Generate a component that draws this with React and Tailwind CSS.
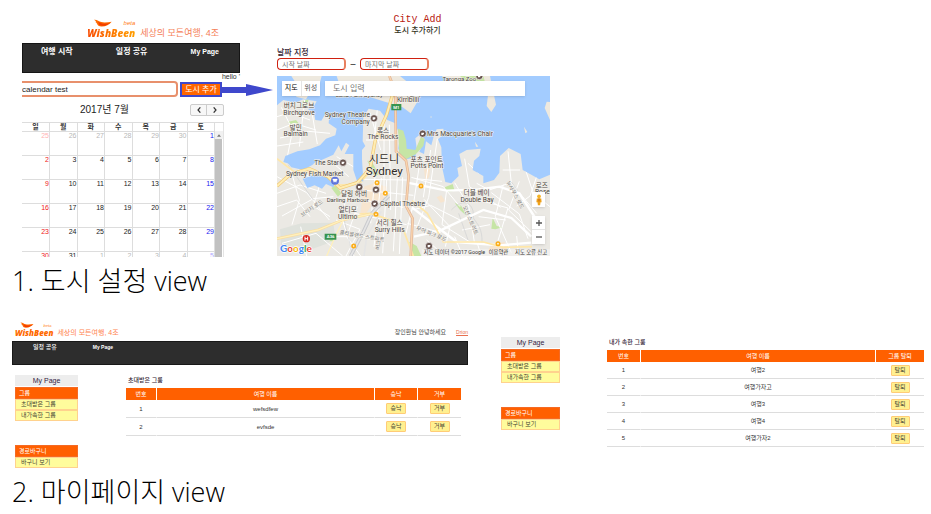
import React from "react";

const latin = "font-['Liberation_Sans','Noto_Sans_CJK_KR',sans-serif]";

function Logo({ small }) {
  return (
    <div className="flex items-end gap-1">
      <div className="flex flex-col">
        <div className={small ? "flex h-1.5 items-end justify-between pr-0.5" : "flex h-[7px] items-end justify-between pr-px"}>
          <svg viewBox="0 0 54 24" className={small ? "ml-1 h-1.5 w-4" : "ml-1.5 h-2 w-5"} aria-hidden="true">
            <path d="M0 2C10 1 14 8 22 9C32 12 43 9 53 8C45 18 31 25 18 22C8 20 12 13 4 9C9 9 4 4 0 2Z" fill="#ff6a00" />
            <path d="M13 8C21 14 34 17 49 11C38 21 23 23 15 17Z" fill="#f23c00" />
          </svg>
          <span className={small ? "text-[4px] leading-[5px] italic text-[#ff7a10]" : "text-[6px] leading-[7px] italic text-[#ff7a10]"}>beta</span>
        </div>
        <strong
          className={
            small
              ? "font-['Open_Sans',sans-serif] text-[8px] leading-[9px] font-extrabold italic text-[#ff6a00]"
              : "bg-gradient-to-r from-[#f84800] to-[#ffa000] bg-clip-text pr-px font-['Open_Sans',sans-serif] text-[10px] leading-3 font-extrabold italic text-transparent"
          }
        >
          WishBeen
        </strong>
      </div>
      <span className={small ? "text-[7px] leading-[9px] text-[#ff8350]" : "text-[9px] leading-[11px] text-[#f58058]"}>세상의 모든여행, 4조</span>
    </div>
  );
}

const weekdays = ["일", "월", "화", "수", "목", "금", "토"];
const weeks = [
  [25, 26, 27, 28, 29, 30, 1],
  [2, 3, 4, 5, 6, 7, 8],
  [9, 10, 11, 12, 13, 14, 15],
  [16, 17, 18, 19, 20, 21, 22],
  [23, 24, 25, 26, 27, 28, 29],
  [30, 31, 1, 2, 3, 4, 5],
];

function dayColor(week, day) {
  if (week === 0 && day === 0) return "text-[#ffb3b3]";
  if (week === 5 && day === 6) return "text-[#b0a8ff]";
  if ((week === 0 && day < 6) || (week === 5 && day > 1)) return "text-[#b8b8b8]";
  if (day === 0) return "text-[#f02020]";
  if (day === 6) return "text-[#2020f0]";
  return "text-[#222]";
}

function Calendar() {
  return (
    <div className="mr-4 flex h-[135px] overflow-hidden border-t border-[#ddd]">
      <table className="w-[193px] table-fixed border-collapse">
        <thead>
          <tr className="h-2">
            {weekdays.map((d) => (
              <th key={d} className="border-r border-b border-[#ddd] p-0 text-[7px] leading-[7px] font-bold text-[#333]">{d}</th>
            ))}
          </tr>
        </thead>
        <tbody>
          {weeks.map((row, w) => (
            <tr key={w} className="h-6">
              {row.map((n, d) => (
                <td key={d} className={"border-r border-b border-[#ddd] p-0 text-right align-top text-[7px] leading-[8px] " + dayColor(w, d)}>{n}</td>
              ))}
            </tr>
          ))}
        </tbody>
      </table>
      <div className="flex flex-1 flex-col border-r border-[#e4e4e4] pt-2">
        <div className="flex h-2 items-center justify-center bg-[#f1f1f1]">
          <svg viewBox="0 0 6 4" className="h-[3px] w-1" aria-hidden="true"><path d="M0 4L3 0L6 4Z" fill="#777" /></svg>
        </div>
        <div className="mr-px flex-1 bg-[#c1c1c1]" />
      </div>
    </div>
  );
}

function TripPanel() {
  return (
    <section className="w-[218px] shrink-0">
      <header className="flex h-[43px] items-end justify-end pr-[21px] pb-1">
        <Logo />
      </header>
      <nav className="flex h-[30px] justify-between border border-[#151515] bg-[#2d2d2d] pt-0.5 pr-5 pl-[18px] text-[8px] leading-[11px] font-bold text-white">
        <a href="#start">여행 시작</a>
        <a href="#share">일정 공유</a>
        <a href="#mypage" className="text-[7px]">My Page</a>
      </nav>
      <p className="h-2 text-right text-[7px] leading-2 text-[#333]">hello '</p>
      <form className="flex h-4 items-center gap-0.5">
        <input
          aria-label="여행 이름"
          defaultValue="calendar test"
          className="h-4 w-[156px] rounded-r-sm border-2 border-l-0 border-[#e8906c] bg-white text-[8px] text-[#222] outline-none"
        />
        <div className="relative">
          <button type="button" className="block h-[15px] w-[42px] border-2 border-[#3f48cc] bg-[#ff6600] text-[8px] leading-[11px] whitespace-nowrap text-white">도시 추가</button>
          <svg viewBox="0 0 51 12" className="absolute top-0.5 left-full h-3 w-[51px]" aria-hidden="true">
            <path d="M0 3H24V0L51 6L24 12V9H0Z" fill="#3f48cc" />
          </svg>
        </div>
      </form>
      <div className="flex h-[25px] items-center pr-4 pl-[58px]">
        <h2 className="flex-1 text-[10px] leading-3 text-[#222]">2017년 7월</h2>
        <div className="flex h-3 rounded-xs border border-[#ccc] bg-[#f7f7f7]">
          <button type="button" aria-label="이전 달" className="flex w-4 items-center justify-center border-r border-[#ccc]">
            <svg viewBox="0 0 6 8" className="h-1.5 w-1" aria-hidden="true"><path d="M5 0L1.500 4L5 8" fill="none" stroke="#333" strokeWidth="1.800" /></svg>
          </button>
          <button type="button" aria-label="다음 달" className="flex w-4 items-center justify-center">
            <svg viewBox="0 0 6 8" className="h-1.5 w-1" aria-hidden="true"><path d="M1 0L4.500 4L1 8" fill="none" stroke="#333" strokeWidth="1.800" /></svg>
          </button>
        </div>
      </div>
      <Calendar />
    </section>
  );
}

function SydneyMap() {
  return (
    <svg viewBox="21 18 819 540" className="block h-[180px] w-full" preserveAspectRatio="xMidYMid slice" role="img" aria-label="시드니 지도">
      <defs>
        <clipPath id="land">
          <path d="M21 106L40 90L75 98L100 88L140 94L130 112L112 116L132 128L136 150L154 152L166 132L178 134L176 160L200 176L196 196L168 206L150 226L118 238L82 244L46 258L40 276L80 288L104 292L126 276L150 272L190 254L206 226L214 244L228 218L238 226L224 252L250 252L250 300L262 336L280 334L276 268L276 240L286 228L278 214L280 140L296 116L330 122L352 150L376 160L390 200L385 235L392 262L410 268L436 262L440 235L436 205L452 192L464 208L448 245L462 252L468 214L484 226L492 196L500 178L520 176L522 192L504 208L514 232L516 290L526 336L544 340L566 318L562 294L576 288L568 252L590 240L632 236L628 258L612 272L608 300L640 318L640 340L672 330L688 308L690 258L716 234L752 252L758 300L784 314L808 328L840 314V558H21Z" />
        </clipPath>
      </defs>
      <path fill="#a3ccff" d="M21 18H840V558H21Z" />
      <path fill="#ebe9e4" d="M21 106L40 90L75 98L100 88L140 94L130 112L112 116L132 128L136 150L154 152L166 132L178 134L176 160L200 176L196 196L168 206L150 226L118 238L82 244L46 258L40 276L80 288L104 292L126 276L150 272L190 254L206 226L214 244L228 218L238 226L224 252L250 252L250 300L262 336L280 334L276 268L276 240L286 228L278 214L280 140L296 116L330 122L352 150L376 160L390 200L385 235L392 262L410 268L436 262L440 235L436 205L452 192L464 208L448 245L462 252L468 214L484 226L492 196L500 178L520 176L522 192L504 208L514 232L516 290L526 336L544 340L566 318L562 294L576 288L568 252L590 240L632 236L628 258L612 272L608 300L640 318L640 340L672 330L688 308L690 258L716 234L752 252L758 300L784 314L808 328L840 314V558H21Z" />
      <path fill="#eee9df" d="M64 18H155L144 60L122 64L108 88L78 80L92 62L78 40ZM200 18H390L445 62L442 95L422 130L398 112L374 104L340 94L302 82L240 80L214 62ZM516 18H660L678 104L664 126L650 108L654 76L600 46L574 56ZM830 95L840 96V150L824 114ZM482 138L486 141L482 144ZM762 170L772 186L766 190ZM615 215L625 230L618 230Z" />
      <path fill="#c6e5a5" d="M570 18H640L648 48H604ZM384 176L400 182L408 210L410 236L436 240L454 198L464 208L460 228L438 252L408 268L388 250ZM52 156L78 150L86 160L64 162ZM98 94L116 88L110 112L96 112ZM184 354L196 344L214 370L204 380ZM292 272L304 272L326 312L314 322ZM140 502L168 490L192 504L188 514H144ZM418 515L440 528L454 558H424ZM554 398L574 408L592 440L570 420ZM668 444L680 468L698 472L676 478L664 476ZM524 352L548 342L554 362L530 366Z" />
      <path fill="#dfe2dc" d="M30 478L94 460L190 458L194 490L174 520L112 542H34Z" />
      <g fill="#f7e5cf"><path d="M282 350L310 340L352 350L342 386L310 400L284 436H270L278 380ZM462 298L482 284L478 320L466 332ZM500 382L514 376L526 394L512 398ZM666 522L704 516L716 550L652 542ZM326 194L372 190L374 210L330 212Z" /></g>
      <g clipPath="url(#land)" fill="none">
        <path stroke="#fff" strokeWidth="3" d="M21 180L72 160L138 180M34 112L68 180L52 260M104 90L88 230M124 116L142 222M21 228L100 216M21 140L60 128L120 150M30 204L116 184L180 190M60 292L88 390L66 464M21 320L110 368L178 450M21 370L90 345L168 370M21 410L80 390L120 440M36 438L130 386L190 380M86 300L150 342L130 408L180 440M200 260L250 290M190 280L236 320M230 380L214 440L252 558M262 410L230 500L272 558M198 450L270 478L228 558M192 500L330 500M254 430L410 464M300 128L332 240M322 118L310 234M342 142L342 380M358 164L362 420M288 210L380 210M282 328L410 330M276 360L430 376M280 390L400 412M316 310L302 460M334 324L312 530M350 330L338 550M382 325L370 544M398 322L388 552M424 322L520 350L570 410M450 274L432 392L408 490M482 240L460 382M502 206L476 382L440 474M452 268L514 280M438 326L516 334M426 420L482 406L574 452M412 460L512 488M462 388L540 470L526 530M530 360L516 464L606 520M554 338L596 408L614 522M584 266L598 350L692 412M594 280L626 310M620 340L658 360L716 340M626 390L714 414L684 512M664 368L748 432L774 506M700 344L676 440L724 548M748 334L716 420L784 486M714 244L724 340L800 430M698 300L750 300M760 280L790 370L840 410M800 320L780 378L740 408M626 440L708 450M576 480L660 464M470 510L524 558M554 500L578 558M622 520L634 558M740 498L746 558M36 520L138 490L218 558M92 470L110 558" />
        <path stroke="#d0d1d3" strokeWidth="2" d="M54 284L130 390M212 406L246 548M266 440L304 430M544 420C582 380 614 400 610 444C622 462 638 476 636 520M566 430L594 510M724 336L766 394" />
        <path stroke="#c9cacd" strokeWidth="11" d="M356 378L306 430L280 486L242 558" />
        <path stroke="#e5e5e5" strokeWidth="5" d="M356 378L306 430L280 486L242 558M334 424L290 500L282 558" />
        <path stroke="#fff" strokeWidth="7" d="M412 338L530 362L626 358L688 350L748 370L796 444M426 412L482 456L560 516L690 526L784 518M432 500L510 482L640 420L724 444L784 500" />
        <path stroke="#ffe7a8" strokeWidth="5" d="M21 266L76 308L140 306L190 346L268 342L302 302M268 432L300 430L356 448L402 484L430 558M426 392L472 430L520 516L640 516L700 532L786 530" />
        <path stroke="#f9dda0" strokeWidth="8" d="M21 506L144 480L218 450L302 432" />
        <path stroke="#fff0bd" strokeWidth="4" d="M21 506L144 480L218 450L302 432M220 450L200 490L170 558" />
      </g>
      <path fill="#a3ccff" d="M98 326L140 312L176 318L196 338L190 352L168 342L156 356L134 346L112 354ZM44 268L64 258L96 270L134 250L150 262L128 284L100 300L64 292Z" />
      <g fill="none">
        <path stroke="#efc775" strokeWidth="10" d="M372 60L350 134L316 210L300 296L262 338L210 354L174 320L118 296L62 312L21 348" />
        <path stroke="#ffedb3" strokeWidth="6" d="M372 60L350 134L316 210L300 296L262 338L210 354L174 320L118 296L62 312L21 348" />
        <path stroke="#e0b398" strokeWidth="8" d="M358 18L376 64L378 244L408 272L416 318L408 408L428 446L422 558" />
        <path stroke="#fbd6ae" strokeWidth="4" d="M358 18L376 64L378 244L408 272L416 318L408 408L428 446L422 558" />
      </g>
      <path d="M364 102H394V121H364ZM164 491H199V509H164Z" fill="#37944f" />
      <g className="font-['Roboto','Noto_Sans_CJK_KR',sans-serif]" textAnchor="middle" fill="#4a4541" stroke="#f6f3ed" strokeWidth="3" paintOrder="stroke" fontSize="20">
        <text x="568" y="33" fontSize="18">Taronga Zoo</text>
        <text x="268" y="82" fontSize="18">Luna Park Sydney</text>
        <text x="416" y="78" fontSize="20">키리빌리</text>
        <text x="414" y="97">Kirribilli</text>
        <text x="87" y="115">버치그로브</text><text x="87" y="134">Birchgrove</text>
        <text x="77" y="180">발민</text><text x="77" y="199">Balmain</text>
        <text x="232" y="142">Sydney Theatre</text><text x="257" y="161">Company</text>
        <text x="339" y="189">록스</text><text x="339" y="208">The Rocks</text>
        <text x="471" y="198" textAnchor="start">Mrs Macquarie's Chair</text>
        <text x="170" y="286">The Star</text>
        <text x="134" y="317">Sydney Fish Market</text>
        <text x="470" y="275">포츠 포인트</text><text x="471" y="294">Potts Point</text>
        <text x="252" y="377">달링 하버</text><text x="233" y="397" fontSize="18">Darling Harbour</text>
        <text x="233" y="426">얼티모</text><text x="233" y="446">Ultimo</text>
        <text x="330" y="407" textAnchor="start">Capitol Theatre</text>
        <text x="359" y="466">서리 힐스</text><text x="359" y="486">Surry Hills</text>
        <text x="620" y="375">더블 베이</text><text x="621" y="395">Double Bay</text>
        <text x="797" y="353" textAnchor="start">로즈 ㅂ</text><text x="795" y="373" textAnchor="start">Rose</text>
        <g fill="#302b28"><text x="342" y="278" fontSize="33">시드니</text><text x="343" y="314" fontSize="35">Sydney</text></g>
        <g fontSize="16" fill="#777">
          <text transform="rotate(-34 126 415)" x="126" y="420">브리지 로드</text>
          <text transform="rotate(10 276 498)" x="276" y="504">클리블랜드 스트리트</text>
          <text transform="rotate(22 484 492)" x="484" y="497">무어 파크 로드</text>
          <text transform="rotate(67 602 450)" x="602" y="456">오션 스트리트</text>
          <text transform="rotate(62 735 375)" x="735" y="380">뉴사우스 로드</text>
          <text transform="rotate(-82 325 525)" x="325" y="530">버크</text>
        </g>
      </g>
      <g className="font-['Roboto',sans-serif]" fill="#fff" textAnchor="middle" fontWeight="700" fontSize="13"><text x="379" y="117">M1</text><text x="182" y="505">A36</text></g>
      <g fill="#695550" stroke="#fff" strokeWidth="2">
        {[[312, 145], [458, 191], [219, 278], [268, 351], [318, 359], [314, 401], [628, 18], [477, 528]].map(([x, y]) => (
          <g key={x}><circle cx={x} cy={y} r="11" /><path d={`M${x - 4} ${y - 3}h8v3l-3 4h-5z`} fill="#fff" strokeWidth="0" /></g>
        ))}
      </g>
      <g fill="#fff" stroke="#fbad18" strokeWidth="5">
        {[[321, 338], [346, 370], [453, 348], [318, 433], [251, 528], [684, 521]].map(([x, y]) => <circle key={x} cx={x} cy={y} r="5" />)}
      </g>
      <circle cx="195" cy="332" r="12" fill="#5d74dc" /><path d="M188 327H202L199 335H191ZM190 337H193M197 337H200" fill="#fff" stroke="#fff" />
      <circle cx="109" cy="506" r="11" fill="#d8261e" /><path d="M105 500V512M113 500V512M105 506H113" stroke="#fff" strokeWidth="3" />
      <path d="M455 538H840V558H455Z" fill="#f5f5f5" opacity=".6" />
      <g className="font-['Roboto','Noto_Sans_CJK_KR',sans-serif]" fontSize="16" fill="#333">
        <text x="461" y="553">지도 데이터 ©2017 Google</text><text x="656" y="553">이용약관</text><text x="735" y="553">지도 오류 신고</text>
      </g>
      <text x="30" y="545" className="font-['Lato',sans-serif]" fontSize="30" fontWeight="700" stroke="#fff" strokeWidth="4" paintOrder="stroke">
        <tspan fill="#4285f4">G</tspan><tspan fill="#ea4335">o</tspan><tspan fill="#fbbc05">o</tspan><tspan fill="#4285f4">g</tspan><tspan fill="#34a853">l</tspan><tspan fill="#ea4335">e</tspan>
      </text>
    </svg>
  );
}

function CityPanel() {
  const dateInput = "h-3 w-[69px] rounded-sm border border-[#cf2010] border-r-2 border-r-[#e8805f] bg-white px-1 text-[7px] text-[#333] outline-none placeholder:text-[#777]";
  return (
    <section className="ml-[37px] w-[273px] shrink-0 pt-3.5">
      <header className="pl-2 text-center">
        <h1 className="font-['Liberation_Mono',monospace] text-[10px] leading-3 text-[#b82010]">City Add</h1>
        <p className="text-[8px] leading-[9px] font-medium text-[#332]">도시 추가하기</p>
      </header>
      <label htmlFor="from" className="mt-[13px] block text-[8px] leading-[10px] font-medium text-[#323]">날짜 지정</label>
      <div className="mb-1.5 flex h-3 items-center gap-1">
        <input id="from" placeholder="시작 날짜" className={dateInput} />
        <span className="w-1.5 text-center text-[9px] leading-none">–</span>
        <input aria-label="마지막 날짜" placeholder="마지막 날짜" className={dateInput} />
      </div>
      <div className="relative">
        <SydneyMap />
        <div className="absolute inset-x-0 top-[5px] flex items-start gap-[5px] pr-[25px] pl-[5px]">
          <div className="flex h-[15px] w-[38px] bg-white text-[7px] shadow-sm">
            <button type="button" className="flex-1 border-r border-[#e5e5e5] text-black">지도</button>
            <button type="button" className="flex-1 text-[#555]">위성</button>
          </div>
          <input aria-label="도시 입력" placeholder="도시 입력" className="h-[15px] min-w-0 flex-1 bg-white px-2 text-[8px] shadow outline-none placeholder:text-[#757575]" />
        </div>
        <div className="absolute right-[5px] bottom-3 flex w-[13px] flex-col gap-[9px]">
          <button type="button" aria-label="거리뷰" className="flex h-[15px] items-center justify-center bg-white shadow-sm">
            <svg viewBox="0 0 16 30" className="h-3 w-1.5" aria-hidden="true"><circle cx="8" cy="5" r="5" fill="#f5b324" /><path d="M2 11H14L15 21H12L11 29H5L4 21H1Z" fill="#f0a31b" /><path d="M5 11H11V19H5Z" fill="#d98218" /></svg>
          </button>
          <div className="flex flex-col bg-white shadow-sm">
            <button type="button" aria-label="확대" className="flex h-3.5 items-center justify-center border-b border-[#e5e5e5]"><svg viewBox="0 0 6 6" className="h-1.5 w-1.5" aria-hidden="true"><path d="M3 0V6M0 3H6" stroke="#555" strokeWidth="1.300" /></svg></button>
            <button type="button" aria-label="축소" className="flex h-3.5 items-center justify-center"><svg viewBox="0 0 6 6" className="h-1.5 w-1.5" aria-hidden="true"><path d="M0 3H6" stroke="#555" strokeWidth="1.300" /></svg></button>
          </div>
        </div>
      </div>
    </section>
  );
}

function SideMenu() {
  const head = "border border-[#f56a24] bg-[#ff6000] pl-[3px] text-[6px] leading-[10px] text-white";
  const item = "block border border-[#ffd28e] bg-[#fffc9c] pl-[5px] text-[6px] leading-[9px] text-[#443]";
  return (
    <aside className="w-full">
      <h3 className="mb-px bg-[#ededed] text-center text-[7px] leading-[11px] text-[#324]">My Page</h3>
      <h4 className={head}>그룹</h4>
      <a href="#invited" className={item}>초대받은 그룹</a>
      <a href="#joined" className={item}>내가속한 그룹</a>
      <h4 className={"mt-6 " + head}>경로바구니</h4>
      <a href="#basket" className={item}>바구니 보기</a>
    </aside>
  );
}

const tableHead = "border-r border-white bg-[#ff6000] p-0 text-[6px] leading-3 font-normal text-white last:border-r-0";
const tableCell = "border-r border-b border-r-white border-b-[#ddd] p-0 text-center text-[6px] leading-[10px] text-[#333] last:border-r-0";

function TableButton({ children, narrow }) {
  return (
    <button type="button" className={"h-[11px] rounded-[1px] border border-[#ffcc77] bg-[#fff090] align-middle text-[6px] leading-[9px] text-[#443] " + (narrow ? "w-[19px]" : "w-5")}>
      {children}
    </button>
  );
}

function InvitedPage() {
  return (
    <section className="pt-[3px]">
      <header className="flex items-end justify-between pb-1 pl-[3px]">
        <Logo small />
        <p className="flex gap-2.5 text-[6px] leading-[9px] text-[#444]">
          <span>장인환님 안녕하세요</span>
          <a href="#logout" className="text-[5px] text-[#e87050] underline">Drion</a>
        </p>
      </header>
      <nav className="flex h-6 gap-9 border border-[#181818] bg-[#2d2d2d] pl-5 text-[6px] leading-[10px] font-medium text-white">
        <a href="#share">일정 공유</a>
        <a href="#mypage" className="text-[5px] font-bold">My Page</a>
      </nav>
      <div className="grid grid-cols-[63px_1fr] gap-12 pt-2.5 pr-[7px] pl-[3px]">
        <SideMenu />
        <div>
          <h3 className="mb-[3px] pl-0.5 text-[6px] leading-[10px] font-medium text-[#323]">초대받은 그룹</h3>
          <table className="w-full table-fixed border-separate border-spacing-0">
            <thead>
              <tr>
                <th className={tableHead + " w-[31px]"}>번호</th>
                <th className={tableHead}>여행 이름</th>
                <th className={tableHead + " w-[43px]"}>승낙</th>
                <th className={tableHead + " w-[43px]"}>거부</th>
              </tr>
            </thead>
            <tbody>
              {["wefsdfew", "evfsde"].map((name, i) => (
                <tr key={name} className="h-[18px]">
                  <td className={tableCell}>{i + 1}</td>
                  <td className={tableCell}>{name}</td>
                  <td className={tableCell}><TableButton>승낙</TableButton></td>
                  <td className={tableCell}><TableButton>거부</TableButton></td>
                </tr>
              ))}
            </tbody>
          </table>
        </div>
      </div>
    </section>
  );
}

function JoinedPage() {
  return (
    <section className="grid grid-cols-[59px_1fr] gap-[47px] pt-[18px]">
      <SideMenu />
      <div>
        <h3 className="mb-[3px] pl-0.5 text-[6px] leading-[10px] font-medium text-[#323]">내가 속한 그룹</h3>
        <table className="w-full table-fixed border-separate border-spacing-0">
          <thead>
            <tr>
              <th className={tableHead + " w-[34px]"}>번호</th>
              <th className={tableHead}>여행 이름</th>
              <th className={tableHead + " w-12"}>그룹 탈퇴</th>
            </tr>
          </thead>
          <tbody>
            {["여행2", "여행가자고", "여행3", "여행4", "여행가자2"].map((name, i) => (
              <tr key={name} className="h-[17px]">
                <td className={tableCell}>{i + 1}</td>
                <td className={tableCell}>{name}</td>
                <td className={tableCell}><TableButton narrow>탈퇴</TableButton></td>
              </tr>
            ))}
          </tbody>
        </table>
      </div>
    </section>
  );
}

export default function App() {
  const caption = "mt-2 pl-3 font-['Open_Sans','Noto_Sans_CJK_KR',sans-serif] text-[27px] leading-8 font-light text-black";
  return (
    <main className={"min-h-screen w-full bg-white " + latin}>
      <div className="flex pl-[22px]">
        <TripPanel />
        <CityPanel />
      </div>
      <h2 className={caption}>1. 도시 설정 view</h2>
      <div className="mt-[22px] grid grid-cols-[456fr_423fr] gap-[33px] pr-[7px] pl-3">
        <InvitedPage />
        <JoinedPage />
      </div>
      <h2 className={caption}>2. 마이페이지 view</h2>
    </main>
  );
}
